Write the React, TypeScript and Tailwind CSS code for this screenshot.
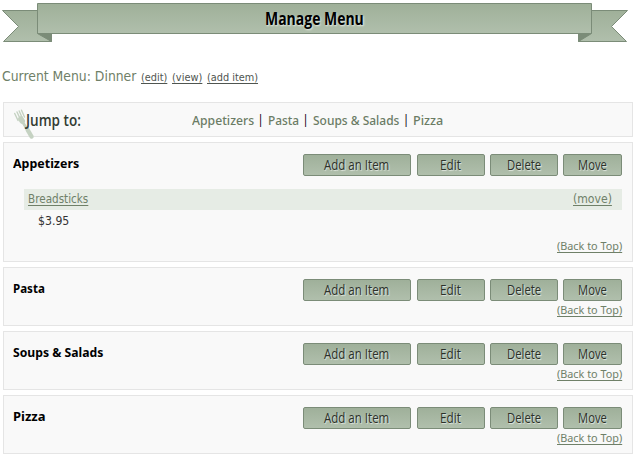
import { useLayoutEffect, useRef, useState, type ReactNode } from "react";

type FitProps = { w: number; link?: boolean; className?: string; children: ReactNode };

/* Single-line text condensed or widened to an exact width. */
function Fit({ w, link = false, className = "", children }: FitProps) {
  const ref = useRef<HTMLSpanElement>(null);
  const [scale, setScale] = useState(1);
  useLayoutEffect(() => {
    if (ref.current) setScale(w / ref.current.offsetWidth);
  }, [w]);
  return (
    <span className={`block shrink-0 text-left ${className}`} style={{ width: w }}>
      <span
        ref={ref}
        className={`inline-block origin-left whitespace-nowrap align-top ${link ? "underline decoration-1 underline-offset-[1.5px] [text-decoration-skip-ink:none]" : ""}`}
        style={{ transform: `scaleX(${scale})` }}
      >
        {children}
      </span>
    </span>
  );
}

const buttons = [
  { label: "Add an Item", box: "w-[108px] mr-1.5", w: 65 },
  { label: "Edit", box: "w-[68px] mr-[5px]", w: 21 },
  { label: "Delete", box: "w-[68px] mr-[5px]", w: 34 },
  { label: "Move", box: "w-[59px]", w: 29 },
];

function Buttons() {
  return (
    <div className="flex">
      {buttons.map((b) => (
        <button
          key={b.label}
          className={`flex h-[22px] shrink-0 justify-center rounded-[2px] border border-[#7b8c78] bg-linear-to-b from-[#9fb09a] to-[#b0bfac] pr-px ${b.box}`}
        >
          <Fit w={b.w} className="font-['Open_Sans',sans-serif] text-[14px] font-medium leading-5 text-[#2b312b] [text-shadow:1px_1px_1px_#e2e8e0]">
            {b.label}
          </Fit>
        </button>
      ))}
    </div>
  );
}

function BackToTop() {
  return (
    <a className="flex justify-end">
      <Fit link w={65} className="font-['Noto_Sans',sans-serif] text-[11px] leading-[14px] text-[#6f8068]">
        (Back to Top)
      </Fit>
    </a>
  );
}

function Section({ title, w, children }: { title: string; w: number; children?: ReactNode }) {
  return (
    <section
      className={`flex flex-col border border-[#e5e5e5] bg-[#f9f9f9] pt-[11px] pr-2.5 pl-[9px] ${children ? "h-[120px]" : "h-[59px]"}`}
    >
      <div className="flex justify-between">
        <Fit w={w} className="font-['Noto_Sans',sans-serif] text-[13px] font-bold leading-[18px] text-black">
          {title}
        </Fit>
        <Buttons />
      </div>
      {children}
      <div className={children ? "mt-2" : "mt-0.5"}>
        <BackToTop />
      </div>
    </section>
  );
}

function Banner() {
  return (
    <header className="relative h-[43px] w-[628px]">
      <svg className="absolute inset-0" width="632" height="43" viewBox="0 0 632 43">
        <defs>
          <linearGradient id="ribbon" x1="0" y1="0" x2="0" y2="1">
            <stop offset="0" stopColor="#9fb099" />
            <stop offset="1" stopColor="#b0bfac" />
          </linearGradient>
        </defs>
        <g stroke="#7b8c78" fill="url(#ribbon)">
          <path d="M2.5 10.5H51.5V41.5H3.5L18.5 26.5Z" />
          <path d="M578.5 10.5H627.5L611.5 26.5L626.5 41.5H578.5Z" />
          <path d="M37.5 33.5H51.5V41.5Z" fill="#7b8c78" />
          <path d="M591.5 33.5H578.5V41.5Z" fill="#7b8c78" />
          <path d="M37.5 3.5H591.5V33.5H37.5Z" />
        </g>
      </svg>
      <h1 className="relative flex justify-center pt-1.5">
        <Fit w={99} className="font-['Open_Sans',sans-serif] text-[17.5px] font-bold leading-6 text-black [text-shadow:1px_1px_2px_#e8eee6]">
          Manage Menu
        </Fit>
      </h1>
    </header>
  );
}

function Fork() {
  return (
    <svg className="absolute top-[6px] left-[9px]" width="24" height="32" viewBox="0 0 24 32">
      <g fill="none" stroke="#c5d2c2" strokeLinecap="round">
        <path strokeWidth="1.4" d="M1.7 4.5L5 11.5M4 3L7.5 10.5M6.2 2L9.5 9.5M8.5 1.2L11.5 8" />
        <path strokeWidth="5.5" d="M7.9 10L9.2 12" />
        <path strokeWidth="2.8" d="M9 12L14.5 21" />
        <path strokeWidth="4.4" d="M14.7 21L18.5 27.5" />
      </g>
    </svg>
  );
}

const navItems = [
  { label: "Appetizers", w: 62 },
  { label: "Pasta", w: 31 },
  { label: "Soups & Salads", w: 86.5 },
  { label: "Pizza", w: 30 },
];

const menuLinks = [
  { label: "(edit)", w: 26, gap: "mr-[5px]" },
  { label: "(view)", w: 30, gap: "mr-[5px]" },
  { label: "(add item)", w: 51, gap: "" },
];

export default function App() {
  return (
    <main className="h-[456px] w-[637px] overflow-hidden bg-white">
      <Banner />
      <div className="flex h-[59px] pt-[23px] pl-0.5">
        <Fit w={134} className="mr-[5px] font-['DejaVu_Sans',sans-serif] text-[14px] leading-5 text-[#6f8068]">
          Current Menu: Dinner
        </Fit>
        {menuLinks.map((l) => (
          <a key={l.label} className={l.gap}>
            <Fit link w={l.w} className="pt-px font-['DejaVu_Sans',sans-serif] text-[10.5px] leading-5 text-[#4f5550]">
              {l.label}
            </Fit>
          </a>
        ))}
      </div>
      <div className="flex w-[633px] flex-col gap-[5px] pl-[3px]">
        <nav className="relative flex h-[35px] border border-[#e5e5e5] bg-[#f9f9f9] pt-[5px] pl-[22px]">
          <Fork />
          <Fit w={55} className="relative mr-[110.5px] font-['Open_Sans',sans-serif] text-[16px] font-semibold leading-6 text-[#333c33]">
            Jump to:
          </Fit>
          {navItems.map((n, i) => (
            <div key={n.label} className="flex">
              {i > 0 && (
                <span className="w-[14px] pt-0.5 text-center font-['Noto_Sans',sans-serif] text-[12px] leading-5 text-[#200020]">|</span>
              )}
              <Fit w={n.w} className="font-['Noto_Sans',sans-serif] text-[13px] font-medium leading-6 text-[#6b7c65]">
                {n.label}
              </Fit>
            </div>
          ))}
        </nav>
        <Section title="Appetizers" w={66}>
          <div className="mt-[13px] ml-[11px] flex h-[21px] shrink-0 justify-between bg-[#e6ece5] pr-2.5 pl-1">
            <Fit link w={60} className="font-['DejaVu_Sans',sans-serif] text-[12px] leading-5 text-[#6f8068]">
              Breadsticks
            </Fit>
            <Fit link w={39} className="font-['DejaVu_Sans',sans-serif] text-[12px] leading-5 text-[#6f8068]">
              (move)
            </Fit>
          </div>
          <div className="mt-px pl-[25px]">
            <Fit w={31} className="font-['DejaVu_Sans',sans-serif] text-[12px] leading-5 text-[#333]">
              $3.95
            </Fit>
          </div>
        </Section>
        <Section title="Pasta" w={32} />
        <Section title="Soups & Salads" w={90} />
        <Section title="Pizza" w={33} />
      </div>
    </main>
  );
}
